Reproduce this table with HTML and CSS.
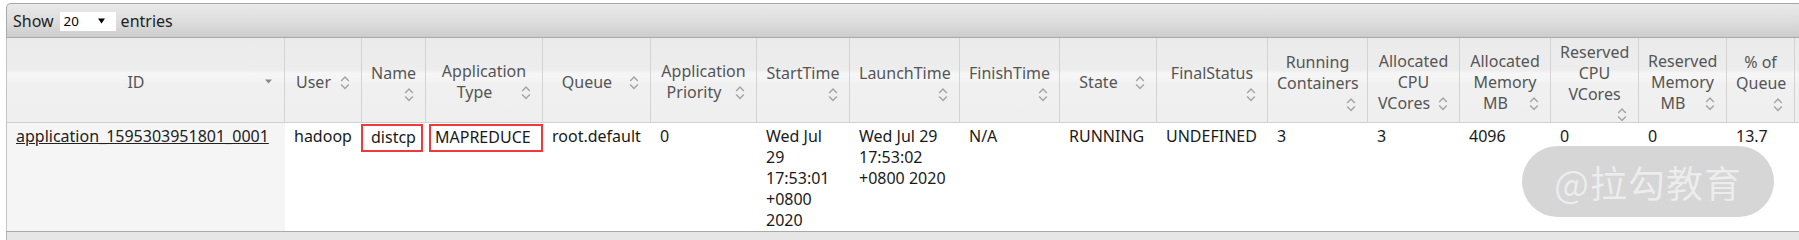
FILE: index.html
```html
<!DOCTYPE html>
<html lang="en">
<head>
<meta charset="utf-8">
<title>Applications</title>
<link rel="stylesheet" href="styles.css">
</head>
<body>
<div class="page">
  <div class="datatable">
    <div class="toolbar">
      <span class="length-label">Show</span>
      <span class="select"><span class="select-value">20</span><svg class="select-arrow" width="7" height="6" viewBox="0 0 7 6"><path d="M0 0.5 L7 0.5 L3.5 5.5 Z" fill="#000"/></svg></span>
      <span class="length-label">entries</span>
    </div>
    <table class="apps">
      <colgroup>
        <col class="w-id"><col class="w-user"><col class="w-name"><col class="w-type"><col class="w-queue"><col class="w-prio"><col class="w-start"><col class="w-launch"><col class="w-finish"><col class="w-state"><col class="w-final"><col class="w-running"><col class="w-acpu"><col class="w-amem"><col class="w-rcpu"><col class="w-rmem"><col class="w-pq"><col class="w-pc">
      </colgroup>
      <thead>
        <tr>
          <th class="first"><div class="sort-wrap">ID<span class="sort-icon"><svg width="16" height="20" viewBox="0 0 16 20"><path d="M6 7.5 L13 7.5 L9.5 11.5 Z" fill="#8a8a8a"/></svg></span></div></th>
          <th><div class="sort-wrap">User<span class="sort-icon"><svg width="16" height="20" viewBox="0 0 16 20"><path d="M5.2 9 L9 5.1 L12.8 9 M5.2 12.5 L9 16.4 L12.8 12.5" fill="none" stroke="#a3a3a3" stroke-width="1.4"/></svg></span></div></th>
          <th><div class="sort-wrap">Name<span class="sort-icon"><svg width="16" height="20" viewBox="0 0 16 20"><path d="M5.2 9 L9 5.1 L12.8 9 M5.2 12.5 L9 16.4 L12.8 12.5" fill="none" stroke="#a3a3a3" stroke-width="1.4"/></svg></span></div></th>
          <th><div class="sort-wrap">Application Type<span class="sort-icon"><svg width="16" height="20" viewBox="0 0 16 20"><path d="M5.2 9 L9 5.1 L12.8 9 M5.2 12.5 L9 16.4 L12.8 12.5" fill="none" stroke="#a3a3a3" stroke-width="1.4"/></svg></span></div></th>
          <th><div class="sort-wrap">Queue<span class="sort-icon"><svg width="16" height="20" viewBox="0 0 16 20"><path d="M5.2 9 L9 5.1 L12.8 9 M5.2 12.5 L9 16.4 L12.8 12.5" fill="none" stroke="#a3a3a3" stroke-width="1.4"/></svg></span></div></th>
          <th><div class="sort-wrap">Application Priority<span class="sort-icon"><svg width="16" height="20" viewBox="0 0 16 20"><path d="M5.2 9 L9 5.1 L12.8 9 M5.2 12.5 L9 16.4 L12.8 12.5" fill="none" stroke="#a3a3a3" stroke-width="1.4"/></svg></span></div></th>
          <th><div class="sort-wrap">StartTime<span class="sort-icon"><svg width="16" height="20" viewBox="0 0 16 20"><path d="M5.2 9 L9 5.1 L12.8 9 M5.2 12.5 L9 16.4 L12.8 12.5" fill="none" stroke="#a3a3a3" stroke-width="1.4"/></svg></span></div></th>
          <th><div class="sort-wrap">LaunchTime<span class="sort-icon"><svg width="16" height="20" viewBox="0 0 16 20"><path d="M5.2 9 L9 5.1 L12.8 9 M5.2 12.5 L9 16.4 L12.8 12.5" fill="none" stroke="#a3a3a3" stroke-width="1.4"/></svg></span></div></th>
          <th><div class="sort-wrap">FinishTime<span class="sort-icon"><svg width="16" height="20" viewBox="0 0 16 20"><path d="M5.2 9 L9 5.1 L12.8 9 M5.2 12.5 L9 16.4 L12.8 12.5" fill="none" stroke="#a3a3a3" stroke-width="1.4"/></svg></span></div></th>
          <th><div class="sort-wrap">State<span class="sort-icon"><svg width="16" height="20" viewBox="0 0 16 20"><path d="M5.2 9 L9 5.1 L12.8 9 M5.2 12.5 L9 16.4 L12.8 12.5" fill="none" stroke="#a3a3a3" stroke-width="1.4"/></svg></span></div></th>
          <th><div class="sort-wrap">FinalStatus<span class="sort-icon"><svg width="16" height="20" viewBox="0 0 16 20"><path d="M5.2 9 L9 5.1 L12.8 9 M5.2 12.5 L9 16.4 L12.8 12.5" fill="none" stroke="#a3a3a3" stroke-width="1.4"/></svg></span></div></th>
          <th><div class="sort-wrap">Running Containers<span class="sort-icon"><svg width="16" height="20" viewBox="0 0 16 20"><path d="M5.2 9 L9 5.1 L12.8 9 M5.2 12.5 L9 16.4 L12.8 12.5" fill="none" stroke="#a3a3a3" stroke-width="1.4"/></svg></span></div></th>
          <th><div class="sort-wrap">Allocated CPU VCores<span class="sort-icon"><svg width="16" height="20" viewBox="0 0 16 20"><path d="M5.2 9 L9 5.1 L12.8 9 M5.2 12.5 L9 16.4 L12.8 12.5" fill="none" stroke="#a3a3a3" stroke-width="1.4"/></svg></span></div></th>
          <th><div class="sort-wrap">Allocated Memory MB<span class="sort-icon"><svg width="16" height="20" viewBox="0 0 16 20"><path d="M5.2 9 L9 5.1 L12.8 9 M5.2 12.5 L9 16.4 L12.8 12.5" fill="none" stroke="#a3a3a3" stroke-width="1.4"/></svg></span></div></th>
          <th><div class="sort-wrap">Reserved CPU VCores<span class="sort-icon"><svg width="16" height="20" viewBox="0 0 16 20"><path d="M5.2 9 L9 5.1 L12.8 9 M5.2 12.5 L9 16.4 L12.8 12.5" fill="none" stroke="#a3a3a3" stroke-width="1.4"/></svg></span></div></th>
          <th><div class="sort-wrap">Reserved Memory MB<span class="sort-icon"><svg width="16" height="20" viewBox="0 0 16 20"><path d="M5.2 9 L9 5.1 L12.8 9 M5.2 12.5 L9 16.4 L12.8 12.5" fill="none" stroke="#a3a3a3" stroke-width="1.4"/></svg></span></div></th>
          <th><div class="sort-wrap">% of Queue<span class="sort-icon"><svg width="16" height="20" viewBox="0 0 16 20"><path d="M5.2 9 L9 5.1 L12.8 9 M5.2 12.5 L9 16.4 L12.8 12.5" fill="none" stroke="#a3a3a3" stroke-width="1.4"/></svg></span></div></th>
          <th class="empty"></th>
        </tr>
      </thead>
      <tbody>
        <tr>
          <td class="first sorted"><a href="#" class="app-link">application_1595303951801_0001</a></td>
          <td>hadoop</td>
          <td><span class="mark mark-name">distcp</span></td>
          <td><span class="mark mark-type">MAPREDUCE</span></td>
          <td>root.default</td>
          <td>0</td>
          <td>Wed Jul 29 17:53:01 +0800 2020</td>
          <td>Wed Jul 29 17:53:02 +0800 2020</td>
          <td>N/A</td>
          <td>RUNNING</td>
          <td>UNDEFINED</td>
          <td>3</td>
          <td>3</td>
          <td>4096</td>
          <td>0</td>
          <td>0</td>
          <td>13.7</td>
          <td></td>
        </tr>
      </tbody>
    </table>
    <div class="footer"></div>
    <div class="watermark">@拉勾教育</div>
  </div>
</div>
</body>
</html>
```
FILE: styles.css
```css
html, body {
  margin: 0;
  background: #ffffff;
}

body {
  font-family: "Noto Sans", "Open Sans", "Liberation Sans", sans-serif;
  font-size: 16px;
  color: #222222;
  overflow: hidden;
}

.page {
  padding: 3px 0 0 6px;
  width: 1793px;
}

.datatable {
  position: relative;
  overflow: hidden;
}

/* ---------- top toolbar ---------- */
.toolbar {
  height: 33px;
  display: flex;
  align-items: center;
  gap: 5px;
  padding-left: 6px;
  border: 1px solid #a9a9a9;
  border-right: none;
  border-radius: 5px 0 0 0;
  background: linear-gradient(to bottom, #e9e9e9 0%, #dedede 50%, #cdcdcd 100%);
  color: #222222;
  line-height: 20px;
}

.select {
  display: inline-flex;
  align-items: center;
  justify-content: space-between;
  width: 56px;
  height: 19px;
  box-sizing: border-box;
  padding: 0 11px 0 4px;
  margin: 1px 0 0 1px;
  background: #ffffff;
  font-size: 13.3px;
  color: #000000;
}

.select-arrow {
  display: block;
}

/* ---------- table ---------- */
.apps {
  table-layout: fixed;
  border-collapse: separate;
  border-spacing: 0;
  width: 1889px;
}

.w-id { width: 279px; }
.w-user { width: 77px; }
.w-name { width: 64px; }
.w-type { width: 117px; }
.w-queue { width: 108px; }
.w-prio { width: 106px; }
.w-start { width: 93px; }
.w-launch { width: 110px; }
.w-finish { width: 100px; }
.w-state { width: 97px; }
.w-final { width: 111px; }
.w-running { width: 100px; }
.w-acpu { width: 92px; }
.w-amem { width: 91px; }
.w-rcpu { width: 88px; }
.w-rmem { width: 88px; }
.w-pq { width: 68px; }
.w-pc { width: 100px; }

.apps th {
  padding: 4px 9px 0;
  border-right: 1px solid #d3d3d3;
  border-bottom: 1px solid #d0d0d0;
  background: linear-gradient(to bottom, #ebebeb 0%, #ededed 38%, #f6f6f6 42%, #f4f4f4 50%, #f0f0f0 55%, #efefef 100%);
  color: #555555;
  font-weight: normal;
  text-align: center;
  vertical-align: middle;
  line-height: 20.8px;
}

.apps th.first,
.apps td.first {
  border-left: 1px solid #c4c4c4;
}

.sort-icon {
  float: right;
  width: 16px;
  height: 18px;
  margin-left: 3px;
}

.sort-icon svg {
  display: block;
  overflow: visible;
}

.apps td {
  padding: 3px 9px 1px;
  vertical-align: top;
  text-align: left;
  line-height: 20.8px;
  color: #1a1a1a;
  background: #ffffff;
}

.apps td.sorted {
  background: #f5f5f5;
}

.app-link {
  color: #222222;
  text-decoration: underline;
}

/* red annotation boxes */
.mark {
  display: inline-block;
  border: 2px solid #ee3a3a;
  vertical-align: -1px;
}

.mark-name {
  padding: 1px 5px 2px 8px;
  margin: -4px 0 -4px -10px;
}

.mark-type {
  padding: 1px 10px 2px 4px;
  margin: -4px 0 -4px -6px;
}

/* bottom toolbar */
.footer {
  height: 30px;
  border-top: 1px solid #a9a9a9;
  border-left: 1px solid #b4b4b4;
  background: #e6e6e6;
}

/* watermark */
.watermark {
  position: absolute;
  left: 1516px;
  top: 143px;
  width: 252px;
  height: 71px;
  border-radius: 36px;
  background: #d6d6d6;
  color: #ededed;
  display: flex;
  align-items: center;
  justify-content: center;
  font-family: "Noto Sans CJK SC", "Noto Sans", sans-serif;
  font-size: 37px;
  letter-spacing: 1px;
  text-shadow: 0 0 1px rgba(0, 0, 0, 0.06);
}
```
